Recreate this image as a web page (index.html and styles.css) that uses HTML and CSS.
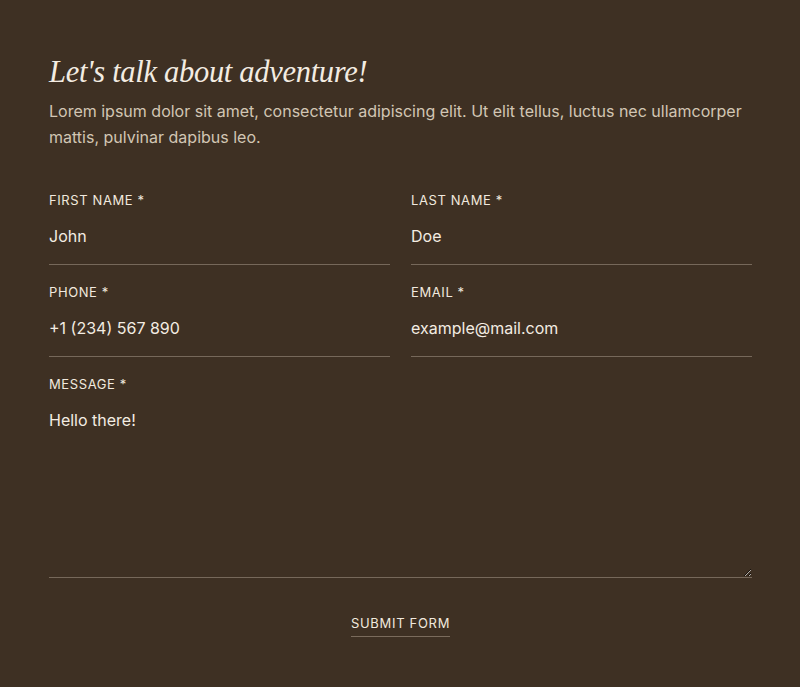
FILE: index.html
```html
<!DOCTYPE html>
<html lang="en">
<head>
<meta charset="utf-8">
<title>Contact</title>
<link rel="stylesheet" href="styles.css">
</head>
<body>
<main class="page">
  <h1 class="title">Let's talk about adventure!</h1>
  <p class="intro">Lorem ipsum dolor sit amet, consectetur adipiscing elit. Ut elit tellus, luctus nec ullamcorper mattis, pulvinar dapibus leo.</p>
  <form class="form">
    <div class="grid">
      <label class="field">
        <span class="label">First Name *</span>
        <input class="input" type="text" value="John">
      </label>
      <label class="field">
        <span class="label">Last Name *</span>
        <input class="input" type="text" value="Doe">
      </label>
      <label class="field">
        <span class="label">Phone *</span>
        <input class="input" type="text" value="+1 (234) 567 890">
      </label>
      <label class="field">
        <span class="label">Email *</span>
        <input class="input" type="text" value="example@mail.com">
      </label>
      <label class="field field-wide">
        <span class="label">Message *</span>
        <textarea class="input textarea">Hello there!</textarea>
      </label>
    </div>
    <div class="actions">
      <button class="submit" type="button">Submit Form</button>
    </div>
  </form>
</main>
</body>
</html>
```
FILE: styles.css
```css
html, body {
  margin: 0;
  background: #3e3023;
}
body {
  font-family: Inter, "Noto Sans", sans-serif;
  color: #efe7dc;
}
.page {
  padding: 53px 48px 40px 49px;
}
.title {
  margin: 0;
  font-family: "Liberation Serif", "DejaVu Serif", serif;
  font-style: italic;
  font-weight: 400;
  font-size: 30.5px;
  line-height: 38px;
  color: #f3ece2;
  letter-spacing: -0.3px;
}
.intro {
  margin: 7px 0 0;
  font-size: 16px;
  line-height: 26px;
  color: #d2c6b4;
  letter-spacing: 0;
}
.form {
  margin-top: 42px;
}
.grid {
  display: grid;
  grid-template-columns: 1fr 1fr;
  column-gap: 21px;
  row-gap: 19px;
}
.field {
  display: flex;
  flex-direction: column;
}
.field-wide {
  grid-column: 1 / -1;
}
.label {
  font-size: 13px;
  line-height: 16px;
  text-transform: uppercase;
  letter-spacing: 0.6px;
  color: #f1e9de;
}
.input {
  margin-top: 16px;
  border: 0;
  border-bottom: 1px solid #76685a;
  background: transparent;
  color: #f3ece2;
  font-family: Inter, "Noto Sans", sans-serif;
  font-size: 16px;
  line-height: 24px;
  padding: 0 0 16px;
  outline: none;
}
.textarea {
  height: 169px;
  resize: vertical;
  padding: 0;
  margin-top: 16px;
}
.actions {
  display: flex;
  justify-content: center;
  margin-top: 37px;
}
.submit {
  background: transparent;
  border: 0;
  border-bottom: 1px solid #7a6b5c;
  padding: 0 0 5px;
  font-family: Inter, "Noto Sans", sans-serif;
  font-size: 13px;
  line-height: 16px;
  letter-spacing: 0.7px;
  text-transform: uppercase;
  color: #f1e9de;
}
```
